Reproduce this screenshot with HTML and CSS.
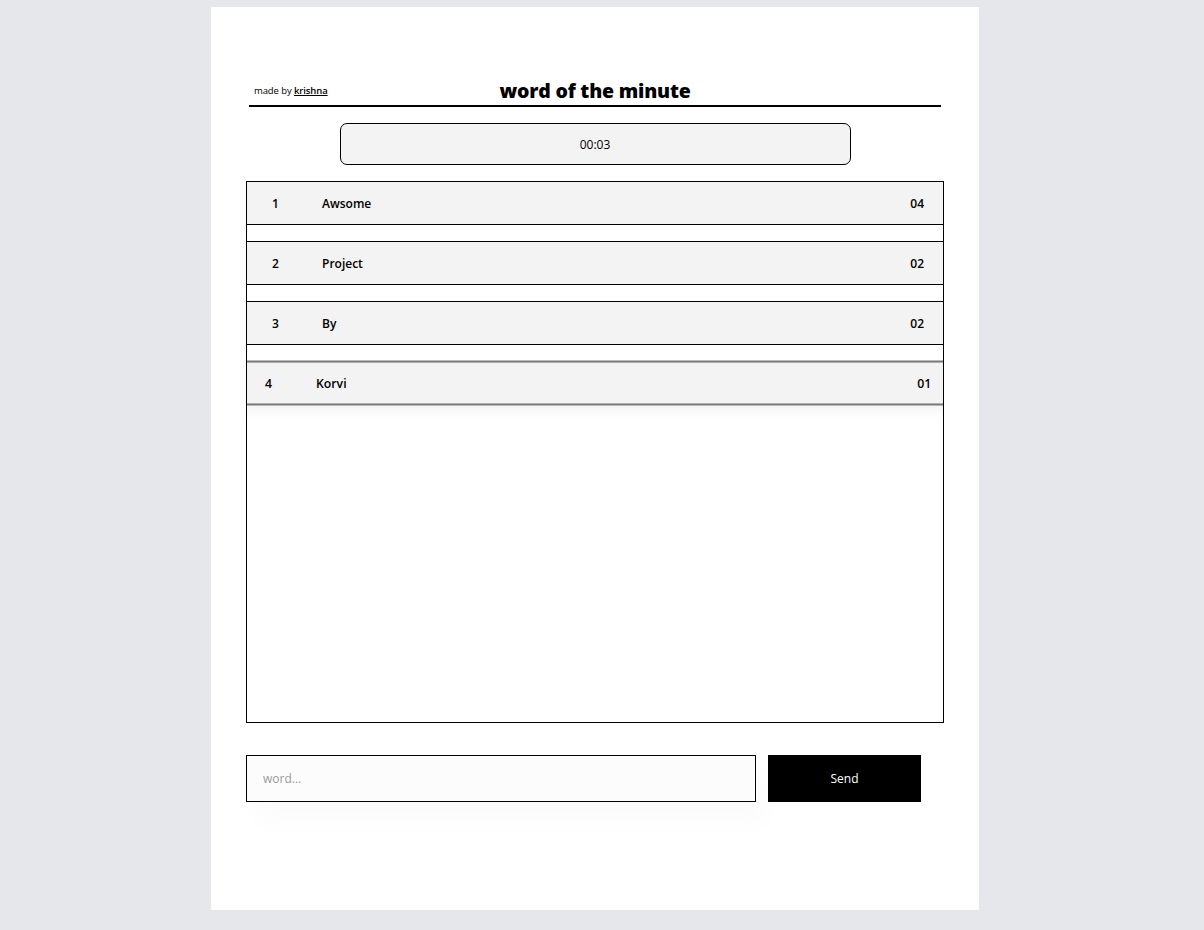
FILE: index.html
```html
<!DOCTYPE html>
<html lang="en">
<head>
<meta charset="utf-8">
<title>word of the minute</title>
<link rel="stylesheet" href="styles.css">
</head>
<body>
<main class="page">
  <header class="header">
    <div class="credit">made by <a href="#" class="credit-link">krishna</a></div>
    <h1 class="title">word of the minute</h1>
    <div class="spacer"></div>
  </header>
  <div class="timer">00:03</div>
  <section class="board">
    <div class="row">
      <span class="rank">1</span>
      <span class="word">Awsome</span>
      <span class="count">04</span>
    </div>
    <div class="row">
      <span class="rank">2</span>
      <span class="word">Project</span>
      <span class="count">02</span>
    </div>
    <div class="row">
      <span class="rank">3</span>
      <span class="word">By</span>
      <span class="count">02</span>
    </div>
    <div class="row row-active">
      <span class="rank">4</span>
      <span class="word">Korvi</span>
      <span class="count">01</span>
    </div>
  </section>
  <form class="composer" onsubmit="return false">
    <input class="word-input" type="text" placeholder="word...">
    <button class="send" type="submit">Send</button>
  </form>
</main>
</body>
</html>
```

FILE: styles.css
```css
* { box-sizing: border-box; }

html, body {
  margin: 0;
  padding: 0;
}

body {
  background: #e5e7eb;
  font-family: "Open Sans", "Noto Sans", sans-serif;
  color: #000;
  padding: 7px 0 20px 211px;
}

.page {
  width: 768px;
  height: 903px;
  background: #fff;
  padding-top: 67px;
}

.header {
  margin: 0 38px;
  display: grid;
  grid-template-columns: 1fr auto 1fr;
  align-items: end;
  height: 33px;
  border-bottom: 2px solid #000;
  padding-bottom: 2px;
}

.credit {
  font-size: 9.5px;
  padding-left: 5px;
  padding-bottom: 6px;
  letter-spacing: -0.1px;
}

.credit-link {
  color: #000;
  font-weight: 600;
  text-decoration: underline;
}

.title {
  margin: 0;
  font-size: 19.5px;
  font-weight: 800;
  line-height: 24px;
  letter-spacing: -0.2px;
}

.timer {
  width: 511px;
  height: 42px;
  margin: 16px auto 0;
  border: 1px solid #000;
  border-radius: 7px;
  background: #f3f3f3;
  display: flex;
  align-items: center;
  justify-content: center;
  font-size: 12px;
}

.board {
  margin: 16px 35px 0;
  height: 542px;
  border: 1px solid #000;
  overflow: hidden;
  display: flex;
  flex-direction: column;
  gap: 16px;
}

.row {
  flex: none;
  height: 44px;
  background: #f3f3f3;
  border-top: 1px solid #000;
  border-bottom: 1px solid #000;
  display: flex;
  align-items: center;
  padding: 0 19px 0 24px;
  font-size: 12px;
  font-weight: 600;
}

.row:first-child {
  margin-top: -1px;
}

.rank {
  width: 51px;
  padding-left: 1px;
}

.word {
  flex: 1;
}

.row-active {
  margin-top: -1px;
  border-top: 2px solid #7a7a7a;
  border-bottom: 2px solid #7a7a7a;
  transform: translateY(1px) scale(1.022);
  box-shadow: 0 5px 10px rgba(0, 0, 0, 0.05);
}

.composer {
  margin: 32px 35px 0;
  display: flex;
  gap: 12px;
}

.word-input {
  width: 510px;
  height: 47px;
  border: 1px solid #000;
  background: #fcfcfc;
  padding: 0 16px;
  font-family: inherit;
  font-size: 12px;
  outline: none;
  box-shadow: 10px 20px 26px rgba(0, 0, 0, 0.02);
}

.word-input::placeholder {
  color: #999;
}

.send {
  width: 153px;
  height: 47px;
  border: none;
  background: #000;
  color: #fff;
  font-family: inherit;
  font-size: 12px;
  cursor: pointer;
}
```
